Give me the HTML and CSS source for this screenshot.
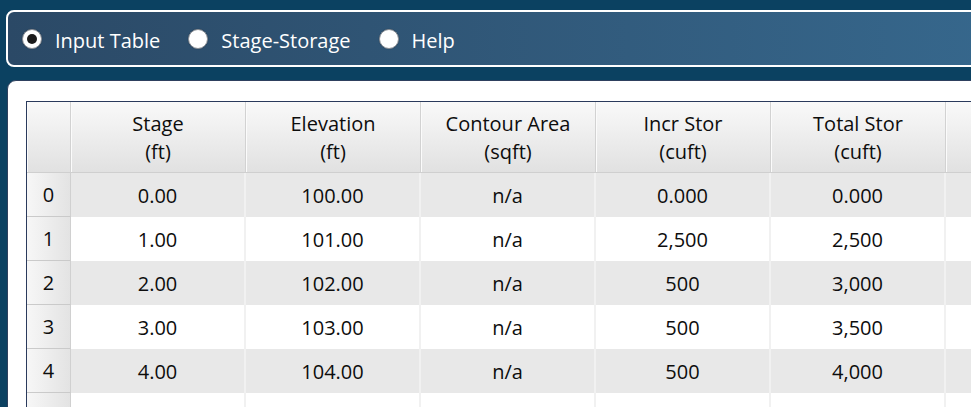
FILE: index.html
```html
<!DOCTYPE html>
<html lang="en">
<head>
    <meta charset="UTF-8">
    <title>Stage-Storage Input</title>
    <link rel="stylesheet" href="styles.css">
</head>
<body>
    <div class="modos">
        <label class="opcion"><span class="radio activo"></span><span class="texto">Input Table</span></label>
        <label class="opcion"><span class="radio"></span><span class="texto">Stage-Storage</span></label>
        <label class="opcion"><span class="radio"></span><span class="texto">Help</span></label>
    </div>

    <div class="panel">
        <table class="tabla">
            <thead>
                <tr>
                    <th class="esquina"></th>
                    <th>Stage<br>(ft)</th>
                    <th>Elevation<br>(ft)</th>
                    <th>Contour Area<br>(sqft)</th>
                    <th>Incr Stor<br>(cuft)</th>
                    <th>Total Stor<br>(cuft)</th>
                    <th></th>
                </tr>
            </thead>
            <tbody>
                <tr class="par">
                    <td class="indice">0</td><td>0.00</td><td>100.00</td><td>n/a</td><td>0.000</td><td>0.000</td><td></td>
                </tr>
                <tr>
                    <td class="indice">1</td><td>1.00</td><td>101.00</td><td>n/a</td><td>2,500</td><td>2,500</td><td></td>
                </tr>
                <tr class="par">
                    <td class="indice">2</td><td>2.00</td><td>102.00</td><td>n/a</td><td>500</td><td>3,000</td><td></td>
                </tr>
                <tr>
                    <td class="indice">3</td><td>3.00</td><td>103.00</td><td>n/a</td><td>500</td><td>3,500</td><td></td>
                </tr>
                <tr class="par">
                    <td class="indice">4</td><td>4.00</td><td>104.00</td><td>n/a</td><td>500</td><td>4,000</td><td></td>
                </tr>
                <tr>
                    <td class="indice"></td><td></td><td></td><td></td><td></td><td></td><td></td>
                </tr>
            </tbody>
        </table>
    </div>
</body>
</html>
```

FILE: styles.css
```css
body {
    margin: 0;
    height: 407px;
    overflow: hidden;
    background-color: #0b4161;
    font-family: "Open Sans", "Noto Sans", sans-serif;
    color: #0d0d0d;
}
.modos {
    display: flex;
    align-items: center;
    gap: 28px;
    height: 53px;
    margin: 10px -20px 0 6px;
    padding-left: 14px;
    border: 2px solid #fff;
    border-radius: 8px;
    background: linear-gradient(to right, #2b4966, #36678c);
    color: #fff;
    font-size: 20px;
}
.opcion {
    display: flex;
    align-items: center;
    gap: 13px;
}
.texto {
    margin-top: 3px;
}
.radio {
    width: 18px;
    height: 18px;
    border-radius: 50%;
    background: #fff;
    border: 1px solid #8a8f96;
    box-shadow: 0 0 1px rgba(0, 0, 0, 0.4);
    position: relative;
}
.radio.activo::after {
    content: "";
    position: absolute;
    left: 4px;
    top: 4px;
    width: 10px;
    height: 10px;
    border-radius: 50%;
    background: #1b1b1b;
}
.panel {
    margin: 13px -20px 0 7px;
    height: 400px;
    padding: 20px 0 0 18px;
    background: #fff;
    border: 1px solid #2e405e;
    border-radius: 9px 9px 0 0;
}
.tabla {
    border-collapse: separate;
    border-spacing: 0;
    table-layout: fixed;
    width: 1050px;
    border-top: 1px solid #2a3a5c;
    border-left: 1px solid #2a3a5c;
    font-size: 20px;
}
.tabla th {
    width: 174px;
    height: 68px;
    padding: 2px 0 0;
    font-weight: normal;
    line-height: 28px;
    background: linear-gradient(#f9f9f9, #e1e1e1);
    border-right: 1px solid #d2d2d2;
    border-bottom: 1px solid #cfcfcf;
    box-shadow: inset 1px 0 0 #fbfbfb;
}
.tabla th.esquina {
    width: 43px;
}
.tabla td {
    height: 44px;
    padding: 0;
    text-align: center;
    border-right: 2px solid #f1f1f1;
    background: #fff;
}
.tabla tr.par td {
    background: #e8e8e8;
}
.tabla td.indice {
    background: linear-gradient(to right, #f7f7f7, #e3e3e3);
    border-right: 1px solid #d0d0d0;
    border-bottom: 1px solid #cacaca;
    height: 43px;
}
.tabla tr.par td.indice {
    background: linear-gradient(to right, #f7f7f7, #e3e3e3);
}
```
